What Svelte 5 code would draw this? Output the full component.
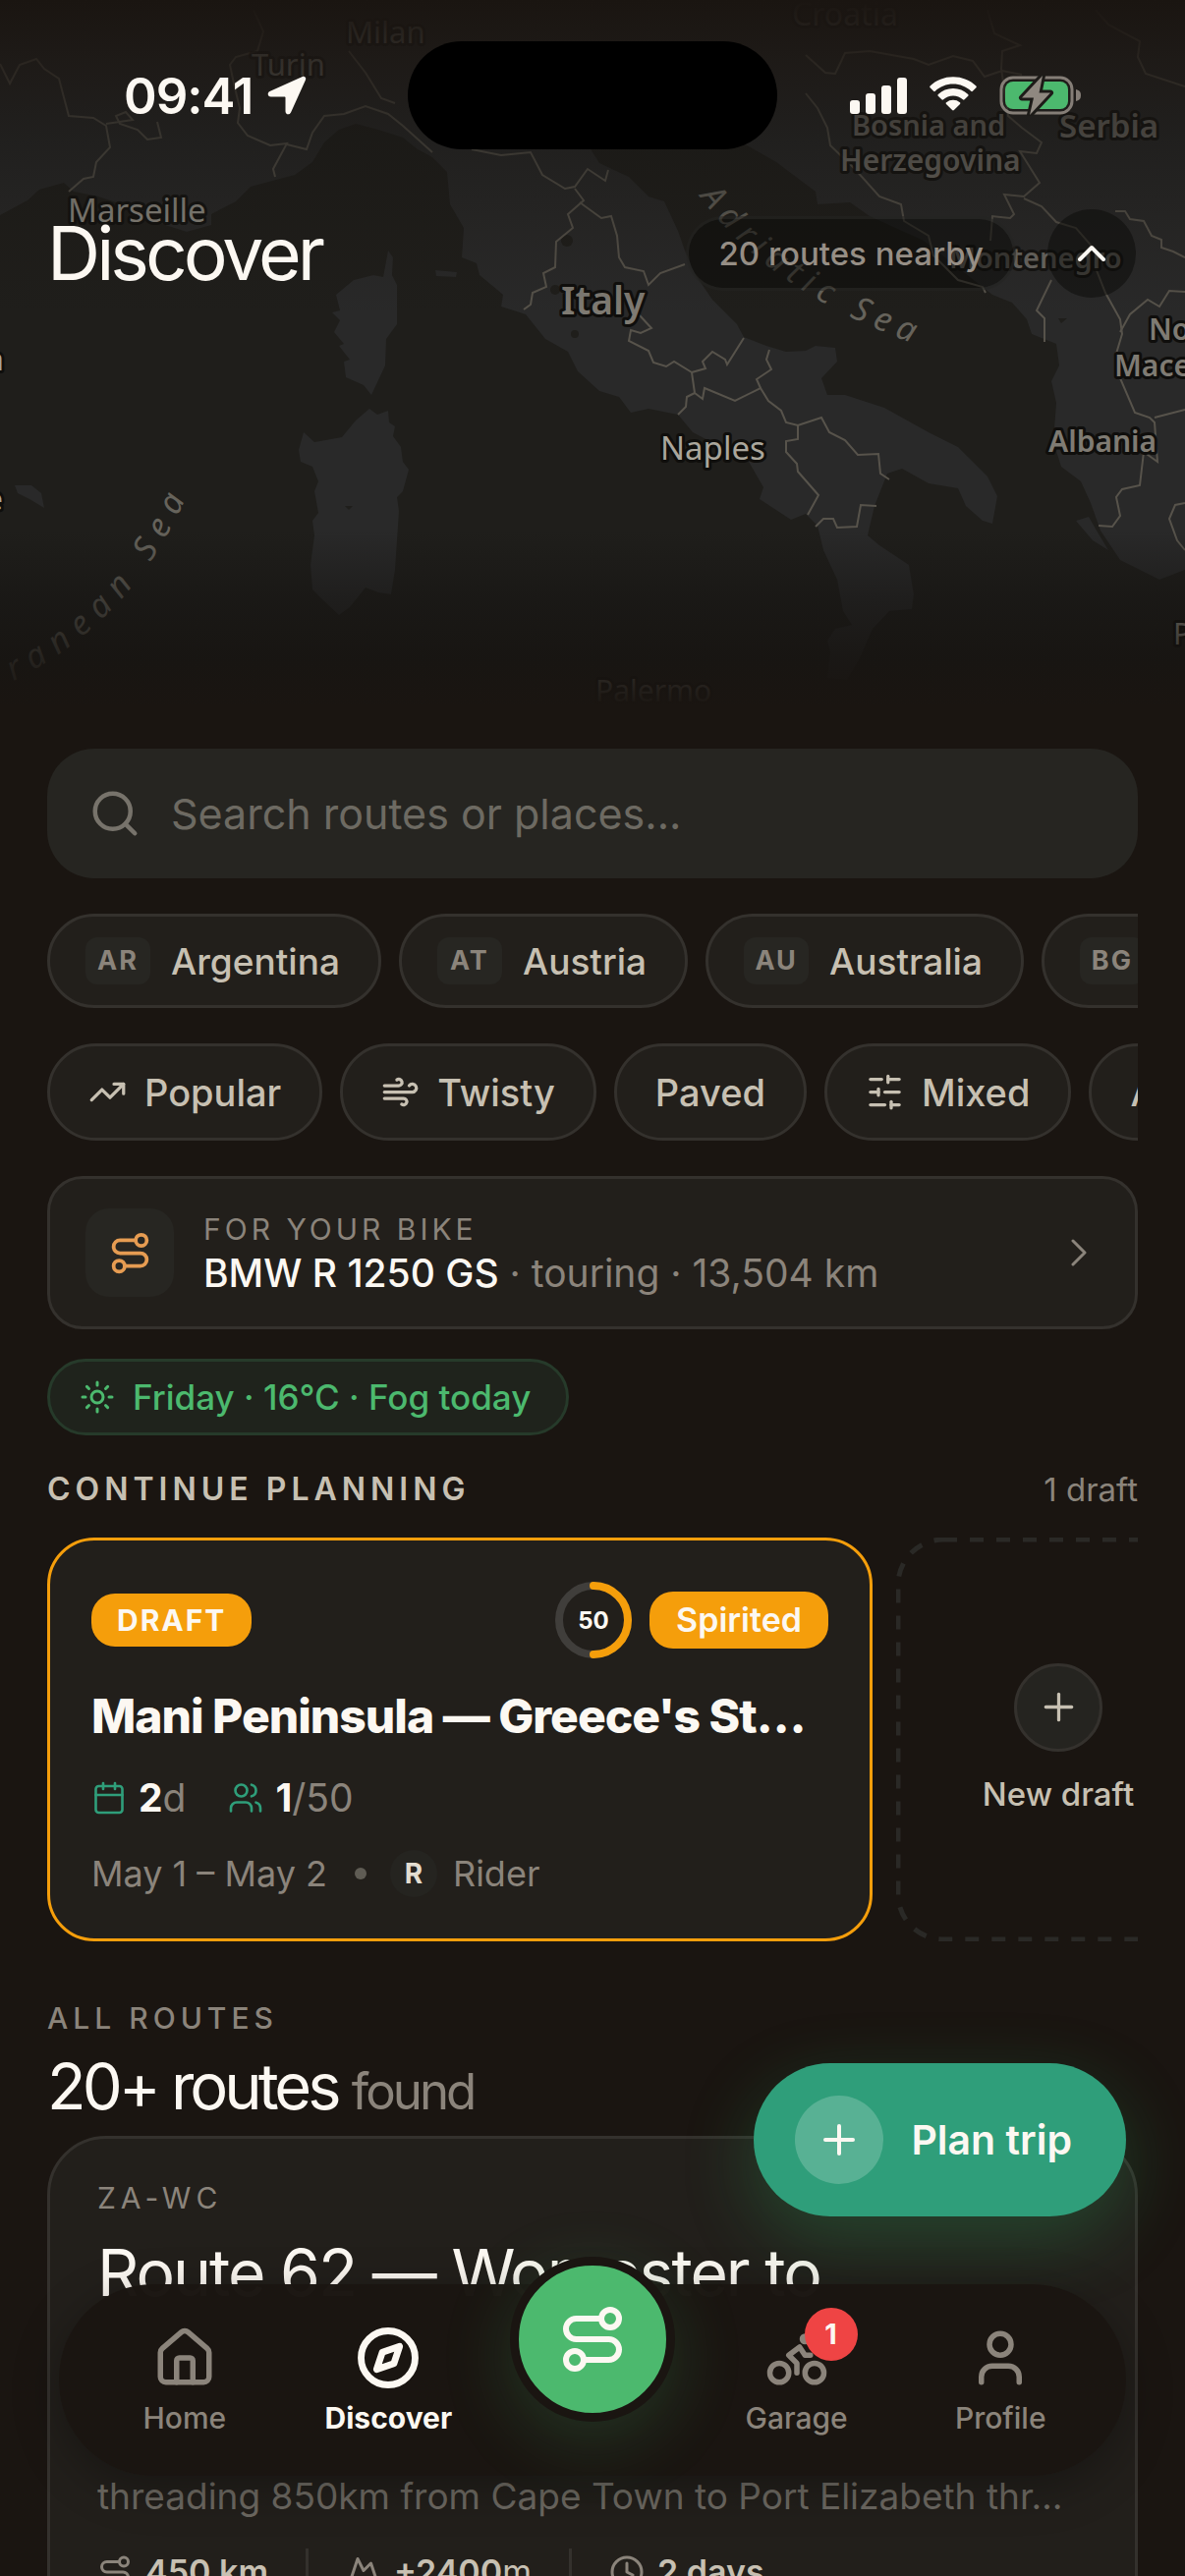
<script lang="ts">
  type Icon = string[];

  function circle(cx: number, cy: number, r: number): string {
    return `M${cx - r} ${cy}a${r} ${r} 0 1 0 ${r * 2} 0a${r} ${r} 0 1 0 ${-r * 2} 0`;
  }

  const icons: Record<string, Icon> = {
    search: [circle(11, 11, 8), 'm21 21-4.3-4.3'],
    trending: ['m22 7-8.5 8.5-5-5L2 17', 'M16 7h6v6'],
    wind: [
      'M12.8 19.6A2 2 0 1 0 14 16H2',
      'M17.5 8a2.5 2.5 0 1 1 2 4H2',
      'M9.8 4.4A2 2 0 1 1 11 8H2'
    ],
    sliders: [
      'M21 4h-7', 'M10 4H3', 'M21 12h-9', 'M8 12H3', 'M21 20h-5', 'M12 20H3',
      'M14 2v4', 'M8 10v4', 'M16 18v4'
    ],
    mountain: ['m8 3 4 8 5-5 5 15H2L8 3z'],
    route: [
      circle(6, 19, 3),
      'M9 19h8.5a3.5 3.5 0 0 0 0-7h-11a3.5 3.5 0 0 1 0-7H15',
      circle(18, 5, 3)
    ],
    right: ['m9 18 6-6-6-6'],
    up: ['m18 15-6-6-6 6'],
    plus: ['M5 12h14', 'M12 5v14'],
    sun: [
      circle(12, 12, 4), 'M12 2v2', 'M12 20v2', 'm4.93 4.93 1.41 1.41', 'm17.66 17.66 1.41 1.41',
      'M2 12h2', 'M20 12h2', 'm6.34 17.66-1.41 1.41', 'm19.07 4.93-1.41 1.41'
    ],
    calendar: [
      'M8 2v4', 'M16 2v4', 'M3 10h18',
      'M5 4h14a2 2 0 0 1 2 2v14a2 2 0 0 1-2 2H5a2 2 0 0 1-2-2V6a2 2 0 0 1 2-2z'
    ],
    users: [
      'M16 21v-2a4 4 0 0 0-4-4H6a4 4 0 0 0-4 4v2', circle(9, 7, 4),
      'M22 21v-2a4 4 0 0 0-3-3.870', 'M16 3.130a4 4 0 0 1 0 7.750'
    ],
    clock: [circle(12, 12, 10), 'M12 6v6l4 2'],
    home: [
      'M15 21v-8a1 1 0 0 0-1-1h-4a1 1 0 0 0-1 1v8',
      'M3 10a2 2 0 0 1 .709-1.528l7-5.999a2 2 0 0 1 2.582 0l7 5.999A2 2 0 0 1 21 10v9a2 2 0 0 1-2 2H5a2 2 0 0 1-2-2z'
    ],
    compass: [circle(12, 12, 10), 'm16.24 7.76-2.12 6.36-6.36 2.12 2.12-6.36z'],
    bike: [
      circle(18.5, 17.5, 3.5), circle(5.5, 17.5, 3.5), circle(15, 5, 1),
      'M12 17.5V14l-3-3 4-3 2 3h2'
    ],
    user: ['M19 21v-2a4 4 0 0 0-4-4H9a4 4 0 0 0-4 4v2', circle(12, 7, 4)]
  };

  const countries = [
    { code: 'AR', name: 'Argentina' },
    { code: 'AT', name: 'Austria' },
    { code: 'AU', name: 'Australia' },
    { code: 'BG', name: 'Bulgaria' }
  ];

  const filters = [
    { name: 'Popular', icon: 'trending' },
    { name: 'Twisty', icon: 'wind' },
    { name: 'Paved', icon: '' },
    { name: 'Mixed', icon: 'sliders' },
    { name: 'Adventure', icon: '' }
  ];

  const borders = [
    'M0 65 10 85 20 66 37 60 45 70 60 80 70 118 95 120 108 128 112 150 98 165 95 180 85 182 70 195',
    'M108 126 135 122 128 114 118 118 122 126 140 132 150 142 164 140 160 124',
    'M258 10 268 32 262 52 240 58 234 66 238 85 244 110 242 125 252 138 275 148 292 146 278 172 280 180',
    'M292 147 312 152 318 135 330 118 350 116 372 108 395 116 410 128 440 155',
    'M355 52 372 74 388 100 402 105',
    'M480 152 510 158 540 155 552 178 575 192 585 190 598 172 616 184 619 173',
    'M585 192 594 204 578 218 583 232 566 246 565 272 553 278 556 292 542 298 540 310 533 315',
    'M590 206 612 222 622 220 628 240 630 262 636 272 655 276 660 290 672 278 697 269',
    'M650 320 663 334 652 339 642 336 640 347 660 357 665 369 678 373 686 368 704 379 707 400 715 406 717 395 748 408 774 395 782 408 795 418 800 430 812 433 836 425 844 440 860 448 873 463 894 462 896 482 905 488',
    'M704 379 718 375 715 368 725 358 738 366 740 371 757 344',
    'M774 395 770 386 785 376 780 366 783 356',
    'M707 400 699 404 698 414 690 422',
    'M812 433 812 447 800 449 800 460 811 472 812 480 833 504 822 524',
    'M892 515 876 514 872 536 852 537 848 528 838 528 830 536',
    'M820 95 832 110 842 130 845 148 870 172 895 200 917 208 920 225 945 240 950 260 975 285 1000 292 1003 298',
    'M820 56 840 74 850 75 860 54 885 52 930 60 945 66 970 57 990 62 1002 78 1020 72 1040 76',
    'M1005 10 1012 34 1038 46 1020 52 1019 70 1026 118 1040 130 1060 145 1055 156 1038 154 1058 186 1042 200 1022 198 1032 218 1028 222 1010 220 1008 245',
    'M1042 202 1060 210 1075 226 1095 232 1115 255 1114 270 1125 298 1140 325 1142 340 1136 360 1140 385 1155 420 1170 425 1175 430 1178 470 1164 460 1160 494 1142 498 1136 506 1140 525 1132 536 1118 535',
    'M1140 338 1150 320 1168 305 1180 312 1190 296 1206 297',
    'M1070 285 1055 316 1063 324 1063 348',
    'M1175 425 1206 417',
    'M1115 10 1128 25 1160 42 1158 58 1166 75 1206 88',
    'M1135 215 1145 215 1150 223 1164 225 1172 240 1182 244 1182 252 1194 256 1206 262',
    'M1206 512 1196 514 1190 528 1198 550 1206 560'
  ];

  const labels = [
    { text: 'Milan', x: 352, y: 44, size: 31, tone: 0.6 },
    { text: 'Turin', x: 256, y: 77, size: 31, tone: 0.6 },
    { text: 'Croatia', x: 806, y: 26, size: 32, tone: 0.5 },
    { text: 'Marseille', x: 69, y: 226, size: 33, tone: 0.85 },
    { text: 'Naples', x: 672, y: 468, size: 33, tone: 1 },
    { text: 'Palermo', x: 606, y: 714, size: 30, tone: 1 }
  ];

  const regions = [
    { text: 'Italy', x: 571, y: 320, size: 39, tone: 1 },
    { text: 'Bosnia and', x: 867, y: 138, size: 29, tone: 0.9 },
    { text: 'Herzegovina', x: 855, y: 174, size: 30, tone: 0.9 },
    { text: 'Serbia', x: 1078, y: 140, size: 33, tone: 0.9 },
    { text: 'Montenegro', x: 966, y: 273, size: 29, tone: 0.8 },
    { text: 'North', x: 1169, y: 346, size: 30, tone: 1 },
    { text: 'Macedonia', x: 1134, y: 383, size: 30, tone: 1 },
    { text: 'Albania', x: 1067, y: 460, size: 30, tone: 1 }
  ];

  let query = '';
</script>

{#snippet icon(name: string, size: number, width: number = 2)}
  <svg
    class="icon"
    width={size}
    height={size}
    viewBox="0 0 24 24"
    stroke-width={width}
    aria-hidden="true"
  >
    {#each icons[name] as d}
      <path {d} />
    {/each}
  </svg>
{/snippet}

<div class="app">
  <section class="hero">
    <svg class="map" viewBox="0 0 1206 720" preserveAspectRatio="xMidYMin slice" aria-hidden="true">
      <g class="land">
        <path
          d="M0 219 28 204 40 193 65 186 75 195 100 200 130 210 165 228 190 236 215 229 215 218 240 205 255 190 300 178 318 165 330 145 345 132 362 126 385 132 410 140 425 152 440 160 455 175 458 208 472 232 470 262 485 268 488 280 512 300 510 312 535 320 555 345 578 358 588 378 610 398 630 404 642 420 660 416 690 422 705 440 762 470 777 496 773 508 805 529 820 523 832 535 838 560 852 590 858 622 867 636 850 640 842 652 845 664 842 690 862 692 875 670 888 640 905 622 928 620 930 605 925 575 895 555 883 545 890 515 903 482 918 477 945 492 975 497 983 515 1000 530 1010 533 1015 505 1005 485 985 465 975 455 945 440 900 415 860 402 842 402 836 385 852 368 850 354 830 352 820 357 800 358 780 352 757 343 750 330 725 305 708 280 697 255 690 235 676 205 660 200 640 180 610 166 600 150 590 110 620 80 650 70 690 90 720 125 790 165 830 195 832 208 865 206 885 220 940 245 1010 300 1030 308 1045 325 1050 340 1075 350 1078 372 1070 388 1075 410 1072 450 1080 475 1100 490 1110 512 1120 540 1140 570 1180 590 1206 580V0H0Z"
        />
        <path
          d="M395 255 400 262 399 280 404 290 404 330 393 345 392 372 378 402 370 392 352 384 350 368 356 366 345 352 350 350 340 338 346 326 338 318 346 316 342 300 360 285 380 280 390 282Z"
        />
        <path
          d="M376 416 384 422 395 418 396 430 402 434 400 444 408 455 410 470 416 478 410 500 404 506 406 520 402 580 398 605 385 603 372 598 356 618 345 626 330 612 318 600 316 575 320 545 318 530 324 522 320 500 324 490 318 475 306 470 304 458 309 440 320 450 348 445 362 428Z"
        />
        <path d="M15 494 32 494 42 502 45 517 30 508 18 502Z" />
        <path d="M443 275 465 277 464 282 444 281Z" />
        <path d="M1095 530 1108 526 1116 540 1128 560 1112 550Z" />
      </g>
      <g class="lakes">
        <circle cx="577" cy="245" r="6" />
        <circle cx="565" cy="295" r="5" />
        <circle cx="585" cy="340" r="4" />
        <path d="M1077 324h9l-6 5z" />
        <path d="M351 515h8l-4 4z" />
      </g>
      <g class="borders">
        {#each borders as d}
          <path {d} />
        {/each}
      </g>
      <path id="adriatic" class="guide" d="M712 200Q790 306 960 360" />
      <path id="mediterranean" class="guide" d="M-8 703Q140 640 200 480" />
      <text class="sea adriatic"><textPath href="#adriatic">Adriatic Sea</textPath></text>
      <text class="sea"><textPath href="#mediterranean">rranean Sea</textPath></text>
      <g class="labels">
        {#each labels as l}
          <text x={l.x} y={l.y} font-size={l.size} opacity={l.tone}>{l.text}</text>
        {/each}
        <text x="-13" y="377" font-size="30">a</text>
        <text x="-14" y="519" font-size="30">e</text>
        <text x="1194" y="656" font-size="30">P</text>
      </g>
      <g class="labels strong">
        {#each regions as l}
          <text x={l.x} y={l.y} font-size={l.size} opacity={l.tone}>{l.text}</text>
        {/each}
      </g>
    </svg>
    <div class="fade"></div>

    <div class="status">
      <div class="time">
        <span>09:41</span>
        <svg width="40" height="40" viewBox="0 0 40 40" aria-hidden="true">
          <path d="M38.500 1.500c1 1 .8 2 .3 3.200L24 37.500c-1.600 3-5.500 2.200-5.500-1.300V22.500c0-.6-.4-1-1-1H3.800C.4 21.500-.4 17.600 2.500 16L35.300 1.200c1.200-.5 2.300-.6 3.200.3Z" fill="currentColor" />
        </svg>
      </div>
      <div class="island"></div>
      <div class="signals">
        <svg width="58" height="38" viewBox="0 0 58 38" fill="currentColor" aria-hidden="true">
          <rect x="0" y="24" width="10" height="14" rx="3" />
          <rect x="16" y="17" width="10" height="21" rx="3" />
          <rect x="32" y="9" width="10" height="29" rx="3" />
          <rect x="48" y="1" width="10" height="37" rx="3" />
        </svg>
        <svg width="52" height="38" viewBox="0 0 52 38" fill="currentColor" aria-hidden="true">
          <path d="M26 7.600c7 0 13.400 2.700 18.200 7.200.5.500 1.200.5 1.700 0l3.500-3.500c.5-.5.5-1.300 0-1.800C43.300 3.700 35.100.300 26 .300S8.700 3.700 2.600 9.500c-.5.5-.5 1.300 0 1.800l3.500 3.500c.5.500 1.200.5 1.700 0C12.600 10.300 19 7.600 26 7.600Z" />
          <path d="M26 19.600c3.800 0 7.200 1.400 9.900 3.700.5.500 1.200.400 1.700 0l3.600-3.600c.5-.5.5-1.300 0-1.800-4-3.600-9.300-5.800-15.200-5.800s-11.200 2.200-15.200 5.800c-.5.5-.5 1.300 0 1.800l3.600 3.600c.5.400 1.200.5 1.700 0 2.700-2.300 6.100-3.700 9.900-3.700Z" />
          <path d="M33 27.900c.5-.5.5-1.300-.1-1.700A11 11 0 0 0 26 23.800a11 11 0 0 0-6.900 2.400c-.6.400-.6 1.200-.1 1.700l6.100 6.200c.5.500 1.300.5 1.800 0Z" />
        </svg>
        <svg width="84" height="42" viewBox="0 0 84 42" aria-hidden="true">
          <rect x="2" y="3" width="72" height="36" rx="12" fill="none" stroke="#857e77" stroke-width="3" />
          <path d="M78 15c4 1 5 3 5 6s-1 5-5 6z" fill="#857e77" />
          <rect x="6" y="7" width="64" height="28" rx="8" fill="#4cb96e" />
          <path d="M44 1 23 23.500h12l-4 17.500 21-22.500H40.500L44 1Z" fill="#8f8880" stroke="#1d1b18" stroke-width="6" stroke-linejoin="round" paint-order="stroke" />
        </svg>
      </div>
    </div>

    <header>
      <h1>Discover</h1>
      <div class="nearby">
        <span class="nearby-count">20 routes nearby</span>
        <button class="collapse" aria-label="Collapse map">{@render icon('up', 48)}</button>
      </div>
    </header>
  </section>

  <main>
    <label class="search">
      {@render icon('search', 54)}
      <input type="search" placeholder="Search routes or places..." bind:value={query} />
    </label>

    <div class="chips">
      {#each countries as c}
        <button class="chip country"><span class="code">{c.code}</span>{c.name}</button>
      {/each}
    </div>

    <div class="chips">
      {#each filters as f}
        <button class="chip filter">
          {#if f.icon}{@render icon(f.icon, 39)}{/if}
          {f.name}
        </button>
      {/each}
    </div>

    <a class="bike" href="#bike">
      <span class="bike-icon">{@render icon('route', 45)}</span>
      <span class="bike-text">
        <span class="eyebrow">FOR YOUR BIKE</span>
        <span class="bike-name"><strong>BMW R 1250 GS</strong> · touring · 13,504 km</span>
      </span>
      {@render icon('right', 48, 1.5)}
    </a>

    <div class="weather">{@render icon('sun', 36)}Friday · 16°C · Fog today</div>

    <div class="section-head">
      <h2>CONTINUE PLANNING</h2>
      <span>1 draft</span>
    </div>

    <div class="drafts">
      <article class="draft">
        <div class="draft-top">
          <span class="tag tag-draft">DRAFT</span>
          <span class="score">
            <svg width="78" height="78" viewBox="0 0 78 78" aria-hidden="true">
              <circle cx="39" cy="39" r="35" fill="none" stroke="#403e3b" stroke-width="8" />
              <path d="M39 4a35 35 0 0 1 0 70" fill="none" stroke="#f59e0b" stroke-width="8" stroke-linecap="round" />
            </svg>
            <b>50</b>
          </span>
          <span class="tag">Spirited</span>
        </div>
        <h3>Mani Peninsula — Greece's St…</h3>
        <div class="draft-stats">
          <span>{@render icon('calendar', 36, 1.75)}<i><b>2</b>d</i></span>
          <span>{@render icon('users', 36, 1.75)}<i><b>1</b>/50</i></span>
        </div>
        <div class="draft-meta">
          <span>May 1 – May 2</span>
          <span class="dot"></span>
          <span class="avatar">R</span>
          <span>Rider</span>
        </div>
      </article>
      <button class="new-draft">
        <svg class="dashes" aria-hidden="true"><rect x="2" y="2" rx="46" /></svg>
        <span class="round">{@render icon('plus', 45, 1.75)}</span>
        New draft
      </button>
    </div>

    <p class="eyebrow wide all">ALL ROUTES</p>
    <h2 class="found">20+ routes <small>found</small></h2>

    <article class="route">
      <p class="eyebrow wide">ZA-WC</p>
      <h3>Route 62 — Worcester to</h3>
      <p class="summary">threading 850km from Cape Town to Port Elizabeth thr…</p>
      <div class="route-stats">
        <span>{@render icon('route', 36)}<b>450 km</b></span>
        <span>{@render icon('mountain', 36)}<i><b>+2400</b>m</i></span>
        <span>{@render icon('clock', 36)}<b>2 days</b></span>
      </div>
    </article>
  </main>

  <button class="fab"><span>{@render icon('plus', 48)}</span>Plan trip</button>

  <nav>
    <a href="#home">{@render icon('home', 66)}Home</a>
    <a href="#discover" class="active" aria-current="page">{@render icon('compass', 66, 2.5)}Discover</a>
    <a href="#ride" class="ride" aria-label="Ride">{@render icon('route', 72)}</a>
    <a href="#garage">{@render icon('bike', 66)}<span class="badge">1</span>Garage</a>
    <a href="#profile">{@render icon('user', 66)}Profile</a>
  </nav>
</div>

<style>
  :global(body) {
    background: #1a1511;
  }

  .app {
    --text: #fcf8f2;
    --soft: #c7c0b2;
    --muted: #8b847b;
    --panel: #221f1b;
    --line: #34312d;
    --orange: #f59e0b;
    --green: #4cb96e;
    --teal: #2f9e7a;
    position: relative;
    height: 100vh;
    overflow: hidden;
    background: #1a1511;
    color: var(--text);
    font-family: Inter, "Liberation Sans", sans-serif;
    font-size: 39px;
  }

  .app * {
    box-sizing: border-box;
  }

  h1, h2, h3, p {
    margin: 0;
    font-weight: 400;
  }

  button, input {
    margin: 0;
    border: 0;
    background: none;
    color: inherit;
    font: inherit;
  }

  a {
    color: inherit;
    text-decoration: none;
  }

  i {
    font-style: normal;
  }

  .icon {
    flex: none;
    fill: none;
    stroke: currentColor;
    stroke-linecap: round;
    stroke-linejoin: round;
  }

  /* map header */
  .hero {
    position: relative;
    height: 720px;
    background: #1f1e1b;
    overflow: hidden;
  }

  .map,
  .fade {
    position: absolute;
    inset: 0;
    width: 100%;
    height: 100%;
  }

  .fade {
    background: linear-gradient(
      #1a1511 0,
      rgba(26, 21, 17, 0.75) 60px,
      rgba(24, 22, 19, 0.5) 140px,
      rgba(26, 22, 18, 0.2) 240px,
      rgba(26, 22, 18, 0) 320px,
      rgba(26, 22, 18, 0) 540px,
      rgba(21, 19, 17, 0.5) 610px,
      rgba(22, 19, 16, 0.8) 670px,
      #1a1511 720px
    );
  }

  .land {
    fill: #292929;
  }

  .lakes {
    fill: #1f1e1b;
  }

  .borders {
    fill: none;
    stroke: #57534b;
    stroke-width: 2;
  }

  .guide {
    fill: none;
  }

  .sea {
    fill: #66635b;
    font-family: "Noto Sans", sans-serif;
    font-size: 34px;
    font-style: italic;
    letter-spacing: 10px;
  }

  .adriatic {
    letter-spacing: 8px;
  }

  .labels {
    fill: #aaa69c;
    stroke: #0f0e0c;
    stroke-width: 6;
    stroke-linejoin: round;
    paint-order: stroke;
    font-family: "Noto Sans", sans-serif;
  }

  .strong {
    fill: #7f7b73;
    font-weight: 600;
  }

  .status {
    position: relative;
    display: grid;
    grid-template-columns: 1fr 376px 1fr;
    align-items: center;
    padding-top: 42px;
  }

  .island {
    height: 110px;
    border-radius: 55px;
    background: #000;
  }

  .time {
    display: flex;
    align-items: center;
    gap: 15px;
    padding-left: 126px;
    font-size: 51px;
    font-weight: 600;
    letter-spacing: -1px;
  }

  .signals {
    display: flex;
    align-items: center;
    justify-content: flex-end;
    gap: 21px;
    padding-right: 105px;
  }

  header {
    position: relative;
    display: flex;
    align-items: center;
    justify-content: space-between;
    padding: 58px 50px 0 48px;
  }

  h1 {
    font-size: 75px;
    line-height: 96px;
    letter-spacing: -4px;
  }

  .nearby {
    display: flex;
    align-items: center;
    gap: 32px;
  }

  .nearby-count {
    padding: 0 30px;
    border: 3px solid rgba(255, 255, 255, 0.06);
    border-radius: 38px;
    background: rgba(10, 9, 8, 0.5);
    color: #968e85;
    font-size: 33px;
    font-weight: 500;
    line-height: 70px;
  }

  .collapse {
    display: grid;
    place-items: center;
    width: 90px;
    height: 90px;
    padding: 0;
    border-radius: 50%;
    background: rgba(10, 9, 8, 0.5);
  }

  main {
    display: flex;
    flex-direction: column;
    padding: 42px 48px 0;
  }

  .search {
    display: flex;
    align-items: center;
    gap: 30px;
    height: 132px;
    padding: 0 42px;
    border-radius: 48px;
    background: #262521;
    color: #77736b;
  }

  .search input {
    flex: 1;
    min-width: 0;
    padding: 0;
    outline: none;
    font-size: 43px;
  }

  .search input::placeholder {
    color: #6d6a62;
  }

  .chips {
    display: flex;
    gap: 18px;
    margin-top: 36px;
    overflow: hidden;
  }

  .chip {
    display: flex;
    flex: none;
    align-items: center;
    gap: 21px;
    height: 96px;
    padding: 0 39px;
    border: 3px solid var(--line);
    border-radius: 50px;
    background: var(--panel);
    color: var(--soft);
    font-size: 37px;
    font-weight: 500;
  }

  .country {
    padding-left: 36px;
  }

  .filter {
    gap: 18px;
    height: 99px;
    font-size: 38px;
  }

  .code {
    width: 66px;
    border-radius: 12px;
    background: #272622;
    color: var(--muted);
    font-size: 27px;
    font-weight: 700;
    letter-spacing: 2px;
    line-height: 48px;
    text-align: center;
  }

  .bike {
    display: flex;
    align-items: center;
    gap: 30px;
    height: 156px;
    margin-top: 36px;
    padding: 0 33px 0 36px;
    border: 3px solid var(--line);
    border-radius: 36px;
    background: var(--panel);
    color: var(--muted);
  }

  .bike-icon {
    display: grid;
    place-items: center;
    width: 90px;
    height: 90px;
    border-radius: 24px;
    background: #272622;
    color: #e69c52;
  }

  .bike-text {
    flex: 1;
    display: flex;
    flex-direction: column;
  }

  .eyebrow {
    color: var(--muted);
    font-size: 30px;
    letter-spacing: 4px;
    line-height: 42px;
  }

  .wide {
    letter-spacing: 5px;
  }

  .bike-name {
    font-size: 39px;
    line-height: 48px;
  }

  .bike-name strong {
    color: var(--text);
    font-weight: 500;
  }

  .weather {
    align-self: flex-start;
    display: flex;
    align-items: center;
    gap: 18px;
    height: 78px;
    margin-top: 30px;
    padding: 0 36px 0 30px;
    border: 3px solid #263a2a;
    border-radius: 39px;
    background: #1f231c;
    color: var(--green);
    font-size: 35px;
    font-weight: 500;
  }

  .section-head {
    display: flex;
    justify-content: space-between;
    margin: 34px 0 28px;
    color: var(--muted);
    font-size: 33px;
    line-height: 42px;
  }

  .section-head h2 {
    color: var(--soft);
    font-size: 32px;
    font-weight: 600;
    letter-spacing: 5px;
  }

  .drafts {
    display: flex;
    gap: 24px;
    overflow: hidden;
  }

  .draft {
    flex: none;
    display: flex;
    flex-direction: column;
    gap: 29px;
    width: 840px;
    padding: 42px;
    border: 3px solid var(--orange);
    border-radius: 48px;
    background: var(--panel);
  }

  .draft-top {
    display: flex;
    align-items: center;
    gap: 18px;
  }

  .tag {
    padding: 0 27px;
    border-radius: 24px;
    background: var(--orange);
    font-size: 34px;
    font-weight: 600;
    line-height: 58px;
  }

  .tag-draft {
    margin-right: auto;
    padding: 0 26px;
    font-size: 30px;
    font-weight: 700;
    letter-spacing: 2px;
    line-height: 54px;
  }

  .score {
    display: grid;
    place-items: center;
    height: 78px;
  }

  .score svg,
  .score b {
    grid-area: 1 / 1;
  }

  .score b {
    font-size: 24px;
  }

  .draft h3 {
    overflow: hidden;
    font-size: 48px;
    font-weight: 800;
    letter-spacing: -1px;
    line-height: 60px;
    white-space: nowrap;
  }

  .draft-stats {
    display: flex;
    gap: 43px;
    color: var(--muted);
    line-height: 48px;
  }

  .draft-stats span {
    display: flex;
    align-items: center;
    gap: 12px;
  }

  .draft-stats .icon {
    color: var(--teal);
  }

  .draft-stats b {
    color: var(--text);
    font-weight: 700;
  }

  .draft-meta {
    display: flex;
    align-items: center;
    color: var(--muted);
    font-size: 36px;
    line-height: 48px;
  }

  .dot {
    width: 12px;
    height: 12px;
    margin: 0 24px 0 28px;
    border-radius: 50%;
    background: #5f5c54;
  }

  .avatar {
    width: 48px;
    margin-right: 16px;
    border-radius: 50%;
    background: #252420;
    color: #e3ddd0;
    font-size: 28px;
    font-weight: 700;
    text-align: center;
  }

  .new-draft {
    position: relative;
    flex: none;
    display: flex;
    flex-direction: column;
    align-items: center;
    justify-content: center;
    gap: 21px;
    width: 330px;
    padding: 0;
    color: var(--soft);
    font-size: 33px;
    font-weight: 500;
    line-height: 45px;
  }

  .dashes {
    position: absolute;
    inset: 0;
    width: 100%;
    height: 100%;
  }

  .dashes rect {
    width: calc(100% - 4px);
    height: calc(100% - 4px);
    fill: none;
    stroke: #2a2926;
    stroke-width: 5;
    stroke-dasharray: 14 13;
  }

  .round {
    display: grid;
    place-items: center;
    width: 90px;
    height: 90px;
    border: 3px solid var(--line);
    border-radius: 50%;
    background: #252420;
  }

  .all {
    margin-top: 57px;
    font-weight: 500;
  }

  .found {
    margin: 10px 0 11px;
    font-size: 65px;
    letter-spacing: -4px;
    line-height: 78px;
  }

  .found small {
    color: var(--muted);
    font-size: 51px;
    letter-spacing: -3px;
    line-height: 1;
  }

  .route {
    padding: 39px 48px;
    border: 3px solid var(--line);
    border-radius: 60px;
    background: var(--panel);
  }

  .route h3 {
    margin-top: 16px;
    font-size: 66px;
    letter-spacing: -2px;
    line-height: 78px;
  }

  .summary {
    margin-top: 162px;
    color: #6c6861;
    font-size: 37px;
    line-height: 54px;
    white-space: nowrap;
  }

  .route-stats {
    display: flex;
    margin-top: 26px;
    color: var(--soft);
    font-size: 34px;
    line-height: 48px;
  }

  .route-stats span {
    display: flex;
    align-items: center;
    gap: 13px;
  }

  .route-stats span + span {
    margin-left: 38px;
    padding-left: 38px;
    border-left: 3px solid var(--line);
  }

  .route-stats .icon {
    color: var(--muted);
  }

  .route-stats b {
    font-weight: 600;
  }

  .fab {
    position: absolute;
    right: 60px;
    bottom: 366px;
    display: flex;
    align-items: center;
    gap: 28px;
    height: 156px;
    padding: 0 55px 0 42px;
    border-radius: 78px;
    background: var(--teal);
    box-shadow: 0 24px 72px rgba(47, 158, 90, 0.3);
    font-size: 41px;
    font-weight: 600;
  }

  .fab span {
    display: grid;
    place-items: center;
    width: 90px;
    height: 90px;
    border-radius: 50%;
    background: rgba(255, 255, 255, 0.2);
  }

  /* floating tab bar */
  nav {
    position: absolute;
    right: 60px;
    bottom: 102px;
    left: 60px;
    display: grid;
    grid-template-columns: repeat(5, 1fr);
    height: 195px;
    padding: 0 24px;
    border-radius: 96px;
    background: rgba(26, 21, 17, 0.99);
    box-shadow: 0 12px 48px rgba(0, 0, 0, 0.3);
    color: var(--muted);
    font-size: 30px;
    font-weight: 500;
  }

  nav a {
    position: relative;
    display: flex;
    flex-direction: column;
    align-items: center;
    gap: 10px;
    padding-top: 42px;
    line-height: 36px;
  }

  nav .active {
    color: var(--text);
    font-weight: 700;
  }

  nav .ride {
    align-self: start;
    justify-self: center;
    justify-content: center;
    width: 168px;
    height: 168px;
    margin-top: -28px;
    padding: 0;
    border: 9px solid #1a1511;
    border-radius: 50%;
    background: var(--green);
    box-shadow: 0 18px 72px rgba(76, 185, 110, 0.2);
    color: var(--text);
  }

  .badge {
    position: absolute;
    top: 24px;
    left: calc(50% + 8px);
    width: 54px;
    border-radius: 27px;
    background: #ef4444;
    color: var(--text);
    font-size: 29px;
    font-weight: 700;
    line-height: 54px;
    text-align: center;
  }
</style>
